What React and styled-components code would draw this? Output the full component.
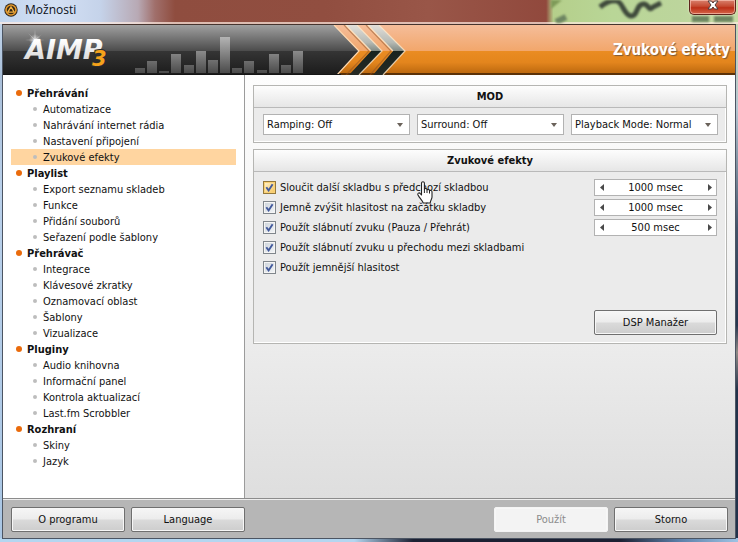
import React from "react";
import styled, { createGlobalStyle } from "styled-components";

const Global = createGlobalStyle`
  *, *::before, *::after { box-sizing: border-box; }
  html, body { margin: 0; }
  body, button, input, select {
    font-family: "DejaVu Sans Condensed", "DejaVu Sans", sans-serif;
    font-size: 11px;
    color: #111;
  }
  button, input, select { margin: 0; padding: 0; }
`;

const Window = styled.div`
  display: flex;
  flex-direction: column;
  min-height: 100vh;
  padding: 0 2px 3px;
  overflow: hidden;
  background:
    linear-gradient(90deg, #b4d6f0 0 48%, #1c2133 56% 84%, #5b7fa8 92%, #9ec3e4) bottom / 100% 4px no-repeat,
    linear-gradient(#cfe0f2, #a9bfd9 14%, #b9d0ea 35%, #a9c6e4) left / 2px 100% no-repeat,
    linear-gradient(#c9dcae, #b6c7d2 20%, #42546b 42%, #27364f 60%, #8f8a86 65%, #22324a 72%) right / 3px 100% no-repeat,
    #b4d6f0;
`;

const TitleBar = styled.header`
  position: relative;
  display: flex;
  align-items: flex-start;
  justify-content: space-between;
  height: 24px;
  margin: 0 -2px;
  background:
    linear-gradient(transparent 22px, rgba(255, 235, 225, 0.7) 22px),
    linear-gradient(90deg, #c3d6ee 0, #d3e0f4 56px, #c5d3ea 100px, #b8a9b4 138px, #a06f6b 155px, #8f4d3f 175px, #914e40 44%, #995648 58%, #91493d 74%, #b5cf8b 75%, #b9d697 83%, #bcd59c 92%, #c6dca5);
`;

const Title = styled.h1`
  display: flex;
  align-items: center;
  gap: 7px;
  height: 19px;
  margin: 0;
  padding-left: 4px;
  font: 12px "Open Sans", sans-serif;
  color: #0c1118;
`;

const GlassMarks = styled.svg`
  position: absolute;
  top: 0;
  right: 3px;
  filter: blur(1px);
`;

const CloseButton = styled.button`
  position: relative;
  display: grid;
  place-items: center;
  width: 47px;
  height: 15px;
  margin-right: 2px;
  padding-bottom: 4px;
  border: 1px solid #5d241c;
  border-top: 0;
  border-radius: 0 0 5px 5px;
  background: linear-gradient(#d9816e, #c54a31 45%, #bc2f17 55%, #d4654a);
  box-shadow: inset 0 0 0 1px rgba(255, 210, 195, 0.6), 0 0 2px #f6f0dc;
`;

const Client = styled.div`
  flex: 1;
  display: flex;
  flex-direction: column;
  border: 1px solid #4c5563;
  border-top-color: #46342e;
`;

const Banner = styled.div`
  display: flex;
  align-items: center;
  justify-content: space-between;
  height: 50px;
  padding-right: 5px;
  background: linear-gradient(#f5bd9a, #f2a76c 51%, #ea8c22 52%, #e3851d 75%, #bd690f 96%, #5b3107 97%);
`;

const BannerTitle = styled.h2`
  margin: 0;
  font: bold 15px "DejaVu Sans Condensed", "DejaVu Sans", sans-serif;
  color: #fff;
  text-shadow: 1px 1px 1px #7d5a38;
`;

const Main = styled.div`
  flex: 1;
  display: grid;
  grid-template-columns: 242px 1fr;
`;

const Sidebar = styled.nav`
  padding: 10px 8px;
  border-right: 1px solid #9b9b9b;
  background: #fff;
`;

const List = styled.ul`
  margin: 0;
  padding: 0;
  list-style: none;
`;

const NavLink = styled.a`
  display: flex;
  align-items: center;
  gap: ${(p) => (p.$group ? "5px" : "6px")};
  height: 16px;
  padding-left: ${(p) => (p.$group ? "5px" : "22px")};
  background: ${(p) => (p.$active ? "#ffd5a0" : "none")};
  font-weight: ${(p) => (p.$group ? "bold" : "normal")};
  color: #111;
  text-decoration: none;
  white-space: nowrap;

  &::before {
    content: "";
    width: ${(p) => (p.$group ? "6px" : "4px")};
    height: ${(p) => (p.$group ? "6px" : "4px")};
    border-radius: 50%;
    background: ${(p) => (p.$group ? "#ea6b0c" : "#bdbdbd")};
  }
`;

const Content = styled.main`
  display: flex;
  flex-direction: column;
  gap: 6px;
  padding: 10px 8px;
  background: linear-gradient(#fdfdfd, #f3f3f3 45%, #dedede);
`;

const Panel = styled.section`
  border: 1px solid #b5b5b2;
  background: #ebebeb;
  box-shadow: inset -1px -1px #fff;
`;

const PanelTitle = styled.h3`
  margin: 0;
  border-bottom: 1px solid #b9b9b9;
  background: linear-gradient(#fdfdfd, #e6e6e6);
  font-size: 11px;
  line-height: 21px;
  text-align: center;
`;

const SelectRow = styled.div`
  display: grid;
  grid-template-columns: repeat(3, 1fr);
  gap: 7px;
  padding: 6px 8px 7px 9px;
`;

const SelectBox = styled.div`
  display: grid;
  align-items: center;

  & > * { grid-area: 1 / 1; }
  & > svg { justify-self: end; margin-right: 7px; pointer-events: none; }
`;

const Select = styled.select`
  appearance: none;
  width: 100%;
  height: 21px;
  padding: 0 18px 0 3px;
  border: 1px solid #b2b2b2;
  border-radius: 0;
  background: #fff;
`;

const Effects = styled.div`
  display: flex;
  flex-direction: column;
  min-height: 171px;
  padding: 5px 9px 8px;
`;

const EffectRow = styled.div`
  display: flex;
  align-items: center;
  justify-content: space-between;
  height: 20px;
`;

const CheckLabel = styled.label`
  position: relative;
  display: flex;
  align-items: center;
  gap: 4px;
  white-space: nowrap;
`;

const CheckBox = styled.span`
  display: grid;
  place-items: center;

  & > * { grid-area: 1 / 1; }
  & > svg { pointer-events: none; visibility: hidden; }
  & > input:checked + svg { visibility: visible; }
`;

const CheckInput = styled.input`
  appearance: none;
  width: 13px;
  height: 13px;
  border: 1px solid ${(p) => (p.$hot ? "#94783c" : "#80868c")};
  background: ${(p) => (p.$hot ? "linear-gradient(135deg, #fff3d0, #f6c55c)" : "linear-gradient(135deg, #cbd2da, #f4f6f8)")};
  box-shadow: inset 0 0 0 1px ${(p) => (p.$hot ? "#fad277" : "#f5f5f5")};
`;

const Pointer = styled.svg`
  position: absolute;
  left: 154px;
  top: 0;
  pointer-events: none;
`;

const Spinner = styled.div`
  display: flex;
  width: 123px;
  height: 17px;
  border: 1px solid #b2b2b2;
  background: #fff;
`;

const SpinInput = styled.input`
  flex: 1;
  min-width: 0;
  border: 0;
  background: none;
  text-align: center;
`;

const SpinButton = styled.button`
  display: grid;
  place-items: center;
  width: 13px;
  border: 0;
  background: none;
`;

const Button = styled.button`
  width: ${(p) => (p.$wide ? "123px" : "114px")};
  height: 25px;
  border: 1px solid #6f6f6f;
  border-radius: 2px;
  background: linear-gradient(#f6f6f6, #ececec 48%, #dadada 52%, #cdcdcd);
  box-shadow: inset 0 0 0 1px #f7f7f7;

  &:disabled {
    border-color: #f4f4f4;
    background: #f3f3f3;
    color: #8b8b8b;
  }
`;

const PanelActions = styled.div`
  display: flex;
  justify-content: flex-end;
  margin-top: auto;
`;

const Footer = styled.footer`
  display: flex;
  justify-content: space-between;
  padding: 8px 7px 6px 8px;
  border-top: 1px solid #8c8c8c;
  background: #b6b6b6;
  box-shadow: inset 0 1px #ededed;
`;

const ButtonGroup = styled.div`
  display: flex;
  gap: 6px;
`;

const NAV = [
  ["Přehrávání", ["Automatizace", "Nahrávání internet rádia", "Nastavení připojení", "Zvukové efekty"]],
  ["Playlist", ["Export seznamu skladeb", "Funkce", "Přidání souborů", "Seřazení podle šablony"]],
  ["Přehrávač", ["Integrace", "Klávesové zkratky", "Oznamovací oblast", "Šablony", "Vizualizace"]],
  ["Pluginy", ["Audio knihovna", "Informační panel", "Kontrola aktualizací", "Last.fm Scrobbler"]],
  ["Rozhraní", ["Skiny", "Jazyk"]],
];

const MODES = ["Ramping: Off", "Surround: Off", "Playback Mode: Normal"];

const EFFECTS = [
  { label: "Sloučit další skladbu s předchozí skladbou", time: "1000 msec", hot: true },
  { label: "Jemně zvýšit hlasitost na začátku skladby", time: "1000 msec" },
  { label: "Použít slábnutí zvuku (Pauza / Přehrát)", time: "500 msec" },
  { label: "Použít slábnutí zvuku u přechodu mezi skladbami" },
  { label: "Použít jemnější hlasitost" },
];

const BARS = [5, 12, 2, 19, 8, 22, 13, 36, 5, 12, 3, 19, 8, 22];

function AppIcon() {
  return (
    <svg width="14" height="14" viewBox="0 0 14 14" aria-hidden="true">
      <circle cx="7" cy="7" r="6.7" fill="#2a2520" />
      <circle cx="7" cy="7" r="5" fill="#3a2c18" stroke="#e59a2c" strokeWidth="1.6" />
      <path d="M7 3.8 10.2 9.2H3.8Z" fill="#2b2218" stroke="#f6b343" strokeWidth="1.3" strokeLinejoin="round" />
    </svg>
  );
}

function BannerArt() {
  return (
    <svg width="410" height="50" viewBox="3 25 410 50" role="img" aria-label="AIMP3">
      <defs>
        <linearGradient id="dark" x1="0" y1="0" x2="0" y2="1">
          <stop offset="0" stopColor="#a0a0a0" />
          <stop offset="0.51" stopColor="#4d4d4d" />
          <stop offset="0.52" stopColor="#353535" />
          <stop offset="1" stopColor="#1b1b1b" />
        </linearGradient>
        <linearGradient id="chev" x1="0" y1="0" x2="0" y2="1">
          <stop offset="0" stopColor="#e2dfda" />
          <stop offset="0.35" stopColor="#b5b9b3" />
          <stop offset="0.51" stopColor="#858d86" />
          <stop offset="0.53" stopColor="#18231f" />
          <stop offset="1" stopColor="#262a24" />
        </linearGradient>
        <linearGradient id="bar" x1="0" y1="37" x2="0" y2="74" gradientUnits="userSpaceOnUse">
          <stop offset="0" stopColor="#b4b4b4" />
          <stop offset="1" stopColor="#484848" />
        </linearGradient>
        <linearGradient id="word" x1="0" y1="0" x2="0" y2="1">
          <stop offset="0.2" stopColor="#ffffff" />
          <stop offset="1" stopColor="#cfcfcf" />
        </linearGradient>
        <radialGradient id="glow">
          <stop offset="0" stopColor="#fff" stopOpacity="0.7" />
          <stop offset="1" stopColor="#fff" stopOpacity="0" />
        </radialGradient>
      </defs>
      <path d="M3 25H334L359 51 337 75H3Z" fill="url(#dark)" />
      <path d="M334 25 359 51 337 75" fill="none" stroke="#ffd9b0" strokeWidth="1.2" />
      {BARS.map((h, i) => (
        <rect key={i} x={135 + Math.round(i * 12.15)} y={73 - h} width="10" height={h} fill="url(#bar)" />
      ))}
      <g fill="url(#chev)">
        <path d="M346 25H357L382 51 359 75H349L371 51Z" />
        <path d="M368 25H379L405 51 383 75H373L393 51Z" />
      </g>
      <g fill="none" strokeWidth="1.2">
        <path d="M344 25 369 51 346 75M366 25 391 51 370 75" stroke="#8d5126" strokeOpacity="0.5" />
        <path d="M346 25 371 51M357 25 382 51 359 75M368 25 393 51M379 25 405 51 383 75" stroke="#ffe9c8" strokeOpacity="0.8" />
      </g>
      <rect x="3" y="74" width="338" height="1" fill="#151515" />
      <text x="25" y="59" fontFamily="DejaVu Sans" fontWeight="bold" fontStyle="italic" fontSize="27" fill="url(#word)">AIMP</text>
      <text x="92" y="66" fontFamily="DejaVu Sans" fontWeight="bold" fontStyle="italic" fontSize="21" fill="#f5a21b" stroke="#2c2c2c" strokeWidth="2" paintOrder="stroke">3</text>
      <circle cx="35" cy="40" r="6" fill="url(#glow)" />
      <path d="M35 29 35.6 39.4 45 40 35.6 40.6 35 51 34.4 40.6 25 40 34.4 39.4ZM28 33 35 39.4 42 34 35.6 40 42 47 35 40.6 29 46 34.4 40Z" fill="#fff" fillOpacity="0.5" />
    </svg>
  );
}

function HandPointer() {
  return (
    <Pointer width="16" height="23" viewBox="0 0 16 23" aria-hidden="true">
      <path
        d="M4.5 12V2.3C4.5 .2 7.4 .2 7.4 2.3V8C8.2 7.2 9.8 7.4 10 8.7 11 8 12.3 8.3 12.5 9.6 13.7 9.1 15 9.7 15 11V16C15 18 13.5 19 13.2 22H6.2C5.5 19.5 2.8 17.5 1 14 .2 12.3 2.2 11.2 3.3 12.6L4.5 14Z"
        fill="#fff" stroke="#222" strokeWidth="1.1" strokeLinejoin="round"
      />
      <path d="M7.4 8V12M10 9V12M12.5 10V12.5" stroke="#222" />
    </Pointer>
  );
}

function Effect({ label, time, hot }) {
  return (
    <EffectRow>
      <CheckLabel>
        <CheckBox>
          <CheckInput type="checkbox" defaultChecked $hot={hot} />
          <svg width="9" height="9" viewBox="0 0 9 9" aria-hidden="true">
            <path d="M1.3 4.2 3.6 7.4 7.6 1.2" fill="none" stroke="#435a9c" strokeWidth="1.9" />
          </svg>
        </CheckBox>
        {label}
        {hot && <HandPointer />}
      </CheckLabel>
      {time && (
        <Spinner>
          <SpinButton aria-label="Snížit">
            <svg width="4" height="7" viewBox="0 0 4 7"><path d="M4 0V7L0 3.5Z" fill="#4a4a4a" /></svg>
          </SpinButton>
          <SpinInput aria-label={label} defaultValue={time} />
          <SpinButton aria-label="Zvýšit">
            <svg width="4" height="7" viewBox="0 0 4 7"><path d="M0 0V7L4 3.5Z" fill="#4a4a4a" /></svg>
          </SpinButton>
        </Spinner>
      )}
    </EffectRow>
  );
}

export default function App() {
  return (
    <Window>
      <Global />
      <TitleBar>
        <Title><AppIcon />Možnosti</Title>
        <GlassMarks width="184" height="23" viewBox="551 0 184 23" aria-hidden="true">
          <path d="M600 7C606 2 612 0 617 1 623 3 624 15 631 16 638 17 636 3 644 4 650 5 648 12 653 7L661 3" fill="none" stroke="#3f4a3c" strokeWidth="5" />
          <path d="M556 22 566 17M692 19H709M714 19H733" stroke="#6d8561" strokeWidth="6" />
          <path d="M551 0H562L551 9Z" fill="#7e9a58" />
        </GlassMarks>
        <CloseButton aria-label="Zavřít">
          <svg width="12" height="10" viewBox="0 0 12 10">
            <path d="M1 1H4.5L6 3 7.5 1H11L8 5 11 9H7.5L6 7 4.5 9H1L4 5Z" fill="#fff" stroke="#4d3a3a" strokeWidth="1" />
          </svg>
        </CloseButton>
      </TitleBar>
      <Client>
        <Banner>
          <BannerArt />
          <BannerTitle>Zvukové efekty</BannerTitle>
        </Banner>
        <Main>
          <Sidebar>
            <List>
              {NAV.map(([group, items]) => (
                <li key={group}>
                  <NavLink href="#" $group>{group}</NavLink>
                  <List>
                    {items.map((item) => (
                      <li key={item}>
                        <NavLink href="#" $active={item === "Zvukové efekty"}>{item}</NavLink>
                      </li>
                    ))}
                  </List>
                </li>
              ))}
            </List>
          </Sidebar>
          <Content>
            <Panel>
              <PanelTitle>MOD</PanelTitle>
              <SelectRow>
                {MODES.map((mode) => (
                  <SelectBox key={mode}>
                    <Select aria-label={mode.split(":")[0]}>
                      <option>{mode}</option>
                    </Select>
                    <svg width="6" height="4" viewBox="0 0 6 4"><path d="M0 0H6L3 4Z" fill="#6a625a" /></svg>
                  </SelectBox>
                ))}
              </SelectRow>
            </Panel>
            <Panel>
              <PanelTitle>Zvukové efekty</PanelTitle>
              <Effects>
                {EFFECTS.map((effect) => <Effect key={effect.label} {...effect} />)}
                <PanelActions>
                  <Button $wide>DSP Manažer</Button>
                </PanelActions>
              </Effects>
            </Panel>
          </Content>
        </Main>
        <Footer>
          <ButtonGroup>
            <Button>O programu</Button>
            <Button>Language</Button>
          </ButtonGroup>
          <ButtonGroup>
            <Button disabled>Použít</Button>
            <Button>Storno</Button>
          </ButtonGroup>
        </Footer>
      </Client>
    </Window>
  );
}
